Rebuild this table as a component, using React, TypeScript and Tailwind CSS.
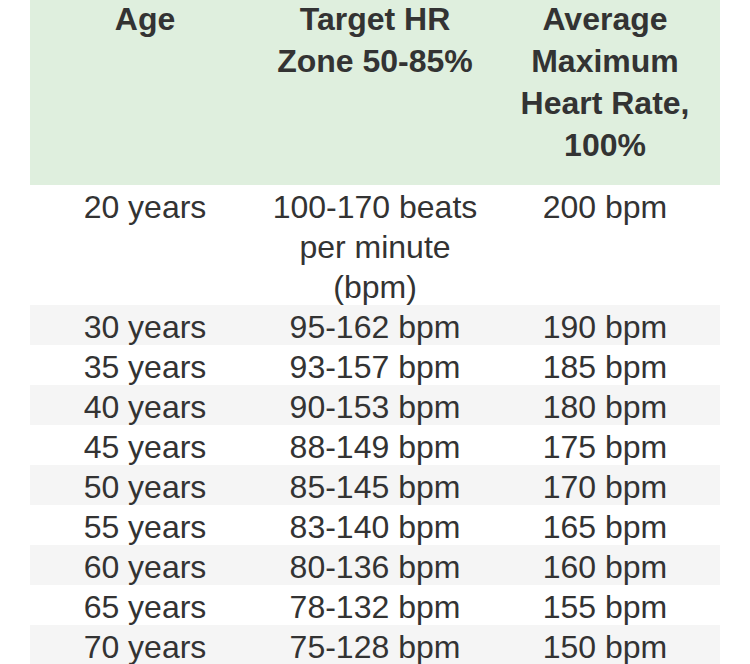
const rows = [
  ["30 years", "95-162 bpm", "190 bpm"],
  ["35 years", "93-157 bpm", "185 bpm"],
  ["40 years", "90-153 bpm", "180 bpm"],
  ["45 years", "88-149 bpm", "175 bpm"],
  ["50 years", "85-145 bpm", "170 bpm"],
  ["55 years", "83-140 bpm", "165 bpm"],
  ["60 years", "80-136 bpm", "160 bpm"],
  ["65 years", "78-132 bpm", "155 bpm"],
  ["70 years", "75-128 bpm", "150 bpm"],
];

export default function App() {
  return (
    <section className="h-[664px] w-[750px] overflow-hidden bg-white font-['Liberation_Sans',Arial,sans-serif] text-[32px] text-[#333333]">
      <div className="ml-[30px] w-[690px]">
        <div className="-mt-[2px] grid grid-cols-3 bg-[#dfefde] pb-[19px] text-center font-bold leading-[42px]">
          <div>Age</div>
          <div>
            Target HR
            <br />
            Zone 50-85%
          </div>
          <div>
            Average
            <br />
            Maximum
            <br />
            Heart Rate,
            <br />
            100%
          </div>
        </div>

        <div className="grid h-[120px] grid-cols-3 pt-[2px] text-center leading-10">
          <div>20 years</div>
          <div>
            100-170 beats
            <br />
            per minute
            <br />
            (bpm)
          </div>
          <div>200 bpm</div>
        </div>

        {rows.map((row, i) => (
          <div
            key={row[0]}
            className={`grid h-10 grid-cols-3 pt-[2px] text-center leading-10 ${i % 2 === 0 ? "bg-[#f5f5f5]" : "bg-white"}`}
          >
            {row.map((cell) => (
              <div key={cell}>{cell}</div>
            ))}
          </div>
        ))}
      </div>
    </section>
  );
}
